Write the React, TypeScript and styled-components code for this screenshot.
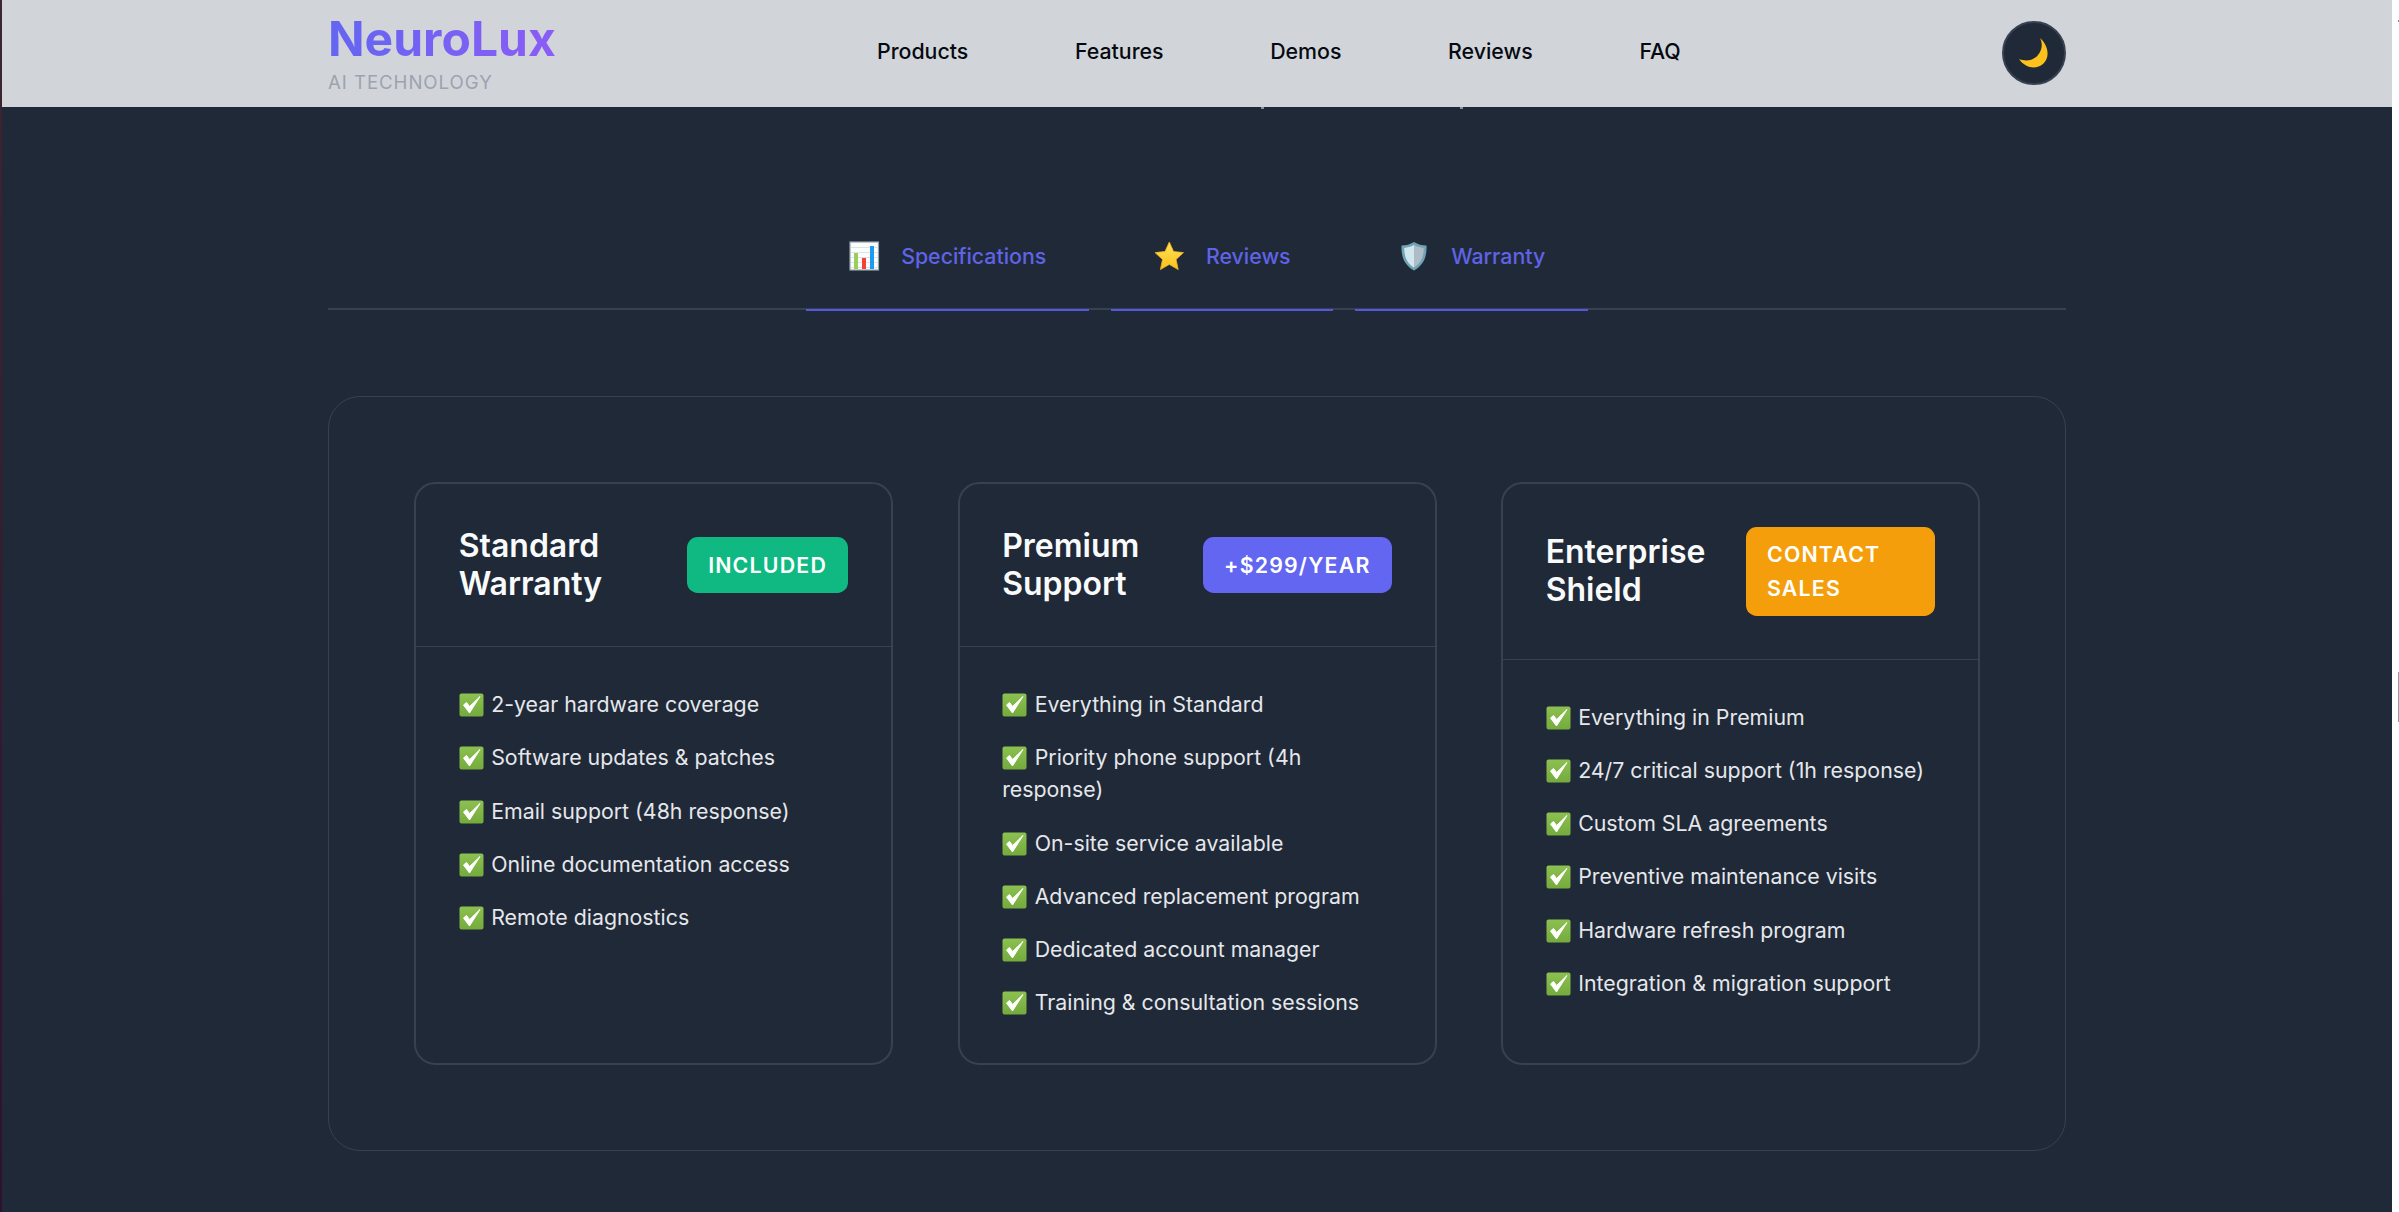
import React from "react";
import styled, { createGlobalStyle } from "styled-components";

// The source page is rendered at 133% so most sizes are multiples of 1.333px
const BG = "#1f2937";
const LINE = "#374151";
const ACCENT = "#5f63e6";

const GlobalStyle = createGlobalStyle`
  html, body {
    margin: 0;
    padding: 0;
    height: 100%;
    background: #fff;
    overflow: hidden;
  }
  * { box-sizing: border-box; }
  body {
    font-family: Inter, "Liberation Sans", sans-serif;
  }
`;

const Window = styled.div`
  position: relative;
  display: flex;
  width: 2399px;
  height: 1212px;
  overflow: hidden;
`;

const EdgeStrip = styled.div`
  flex: 0 0 2px;
  background: linear-gradient(to bottom, #3c2630, #2c1230);
`;

const Page = styled.div`
  flex: 0 0 2390px;
  background: ${BG};
  display: flex;
  flex-direction: column;
`;

const ScrollThumb = styled.div`
  position: absolute;
  right: 0;
  top: 672px;
  width: 1px;
  height: 50px;
  background: #9a9a9a;
`;

const ScrollDot = styled.div`
  position: absolute;
  right: 0;
  top: 20px;
  width: 1px;
  height: 2px;
  background: #8a8a8a;
`;

const Speck = styled.div<{ $x: number }>`
  position: absolute;
  left: ${(p) => p.$x}px;
  top: 107px;
  width: 3px;
  height: 2px;
  background: #8d939c;
`;

const Header = styled.header`
  flex: 0 0 107px;
  background: #d1d5da;
  padding: 0 326px;
  display: flex;
  align-items: center;
  justify-content: space-between;
`;

const Brand = styled.div`
  display: flex;
  flex-direction: column;
  padding-top: 4px;
`;

const Logo = styled.div`
  font-size: 48px;
  font-weight: 700;
  line-height: 53px;
  background: linear-gradient(to right, #6366f1, #8b5cf6);
  background-clip: text;
  -webkit-background-clip: text;
  color: transparent;
`;

const Tagline = styled.div`
  margin-top: 1px;
  font-size: 18.67px;
  line-height: 34px;
  letter-spacing: 0.93px;
  color: #9ca3af;
`;

const Nav = styled.nav`
  display: flex;
  gap: 106.67px;
`;

const NavLink = styled.a`
  font-size: 21.33px;
  font-weight: 500;
  line-height: 34px;
  color: #060a10;
  margin-top: -6px;
`;

const ThemeToggle = styled.button`
  width: 64px;
  height: 64px;
  padding: 0;
  margin-top: -1px;
  border-radius: 50%;
  border: 2.67px solid ${LINE};
  background: ${BG};
  display: flex;
  align-items: center;
  justify-content: center;
`;

const Main = styled.main`
  flex: 1;
  padding: 0 326px;
  display: flex;
  flex-direction: column;
`;

const Tabs = styled.div`
  margin-top: 124px;
  display: flex;
  justify-content: center;
  gap: 22px;
  border-bottom: 2px solid ${LINE};
  height: 79px;
`;

const Tab = styled.button`
  height: 80px;
  padding: 0 42.67px 28px;
  background: none;
  border: none;
  border-bottom: 2px solid #5558da;
  display: flex;
  align-items: center;
  gap: 21.33px;
  font-family: inherit;
  font-size: 21.33px;
  font-weight: 500;
  line-height: 34px;
  color: ${ACCENT};
`;

const Panel = styled.section`
  margin-top: 86px;
  height: 755px;
  border: 1px solid ${LINE};
  border-radius: 32px;
  padding: 85px;
  display: grid;
  grid-template-columns: repeat(3, 1fr);
  gap: 64.5px;
`;

const Plan = styled.article`
  border: 2px solid ${LINE};
  border-radius: 21.33px;
  display: flex;
  flex-direction: column;
`;

const PlanHeader = styled.div`
  padding: 42.67px;
  border-bottom: 1px solid ${LINE};
  display: flex;
  align-items: center;
  justify-content: space-between;
`;

const PlanTitle = styled.h3`
  margin: 0;
  font-size: 32px;
  font-weight: 600;
  line-height: 38.4px;
  color: #f9fafb;
`;

const Badge = styled.span<{ $bg: string; $nowrap?: boolean }>`
  padding: 10.67px 21.33px;
  border-radius: 10.67px;
  background: ${(p) => p.$bg};
  color: #fff;
  font-size: 21.33px;
  font-weight: 600;
  line-height: 34.13px;
  letter-spacing: 1.2px;
  white-space: ${(p) => (p.$nowrap ? "nowrap" : "normal")};
`;

const FeatureList = styled.ul`
  list-style: none;
  margin: 0;
  padding: 41px 42.67px 42.67px;
  display: flex;
  flex-direction: column;
  gap: 21.2px;
`;

const Feature = styled.li`
  font-size: 21.33px;
  line-height: 32px;
  color: #e5e7eb;
`;

const CheckBox = styled.svg`
  width: 25px;
  height: 24px;
  margin-right: 7.5px;
  vertical-align: -5px;
`;

const ChartIcon = () => (
  <svg width="31" height="30" viewBox="0 0 31 30">
    <rect x="1" y="1" width="28.5" height="28" fill="#fbfcfc" stroke="#93a3ad" strokeWidth="1.2" />
    {[6, 11, 16, 21, 26].map((y) => (
      <rect key={y} x="2" y={y} width="26.5" height="0.8" fill="#d5dce0" />
    ))}
    <rect x="5" y="12" width="4" height="16" fill="#9ccc5a" />
    <rect x="13" y="17" width="4" height="11" fill="#f44336" />
    <rect x="21" y="5" width="4" height="23" fill="#1e9bf0" />
  </svg>
);

const StarIcon = () => (
  <svg width="31" height="30" viewBox="0 0 31 30">
    <defs>
      <linearGradient id="star" x1="0" y1="0" x2="0" y2="1">
        <stop offset="0" stopColor="#ffe15a" />
        <stop offset="1" stopColor="#fcc21b" />
      </linearGradient>
    </defs>
    <path
      d="M15.3 1 L19.6 10.5 L29.5 11.6 L22.1 18.4 L24.2 28.6 L15.3 23.4 L6.4 28.6 L8.5 18.4 L1 11.6 L11 10.5 Z"
      fill="url(#star)"
      stroke="#f2b01e"
      strokeWidth="0.8"
      strokeLinejoin="round"
    />
  </svg>
);

const ShieldIcon = () => (
  <svg width="32" height="30" viewBox="-1 0 32 30">
    <path d="M15 1 C19 3.5 23 4.4 27.5 4.6 C28 15 25 24 15 29.5 C5 24 2 15 2.5 4.6 C7 4.4 11 3.5 15 1 Z" fill="#6fa3b5" />
    <path d="M15 4 C11.5 5.8 8.5 6.6 5.2 6.9 C5.2 15 7.5 22 15 26.5 Z" fill="#d2e6ee" />
    <path d="M15 4 C18.5 5.8 21.5 6.6 24.8 6.9 C24.8 15 22.5 22 15 26.5 Z" fill="#adbcc5" />
  </svg>
);

const MoonIcon = () => (
  <svg width="32" height="32" viewBox="0 0 32 32">
    <path
      d="M22 1 C31 9 32 21 25 27 C18 33 7 31 1 22 C9 25 16 23 20 18 C24 13 25 7 22 1 Z"
      fill="#fcc21b"
    />
  </svg>
);

const Check = () => (
  <CheckBox viewBox="0 0 25 24">
    <defs>
      <linearGradient id="check" x1="0" y1="0" x2="0" y2="1">
        <stop offset="0" stopColor="#8cc152" />
        <stop offset="1" stopColor="#75ab3c" />
      </linearGradient>
    </defs>
    <rect x="0.5" y="0.5" width="24" height="23" rx="2" fill="url(#check)" />
    <path
      d="M4.5 12 L10.5 20 L21 3.5 L10.6 13.5 L7.5 9.5 Z"
      fill="#fff"
      stroke="#fff"
      strokeWidth="1"
      strokeLinejoin="round"
    />
  </CheckBox>
);

const NAV_ITEMS = ["Products", "Features", "Demos", "Reviews", "FAQ"];

const TABS = [
  { label: "Specifications", icon: <ChartIcon /> },
  { label: "Reviews", icon: <StarIcon /> },
  { label: "Warranty", icon: <ShieldIcon /> },
];

const PLANS = [
  {
    title: "Standard Warranty",
    badge: "INCLUDED",
    color: "#10b981",
    features: [
      "2-year hardware coverage",
      "Software updates & patches",
      "Email support (48h response)",
      "Online documentation access",
      "Remote diagnostics",
    ],
  },
  {
    title: "Premium Support",
    badge: "+$299/YEAR",
    color: "#6366f1",
    nowrap: true,
    features: [
      "Everything in Standard",
      "Priority phone support (4h response)",
      "On-site service available",
      "Advanced replacement program",
      "Dedicated account manager",
      "Training & consultation sessions",
    ],
  },
  {
    title: "Enterprise Shield",
    badge: "CONTACT SALES",
    color: "#f59e0b",
    features: [
      "Everything in Premium",
      "24/7 critical support (1h response)",
      "Custom SLA agreements",
      "Preventive maintenance visits",
      "Hardware refresh program",
      "Integration & migration support",
    ],
  },
];

const App: React.FC = () => {
  return (
    <Window>
      <GlobalStyle />
      <EdgeStrip />
      <Page>
        <Header>
          <Brand>
            <Logo>NeuroLux</Logo>
            <Tagline>AI TECHNOLOGY</Tagline>
          </Brand>
          <Nav>
            {NAV_ITEMS.map((item) => (
              <NavLink key={item}>{item}</NavLink>
            ))}
          </Nav>
          <ThemeToggle>
            <MoonIcon />
          </ThemeToggle>
        </Header>

        <Main>
          <Tabs>
            {TABS.map((tab) => (
              <Tab key={tab.label}>
                {tab.icon}
                {tab.label}
              </Tab>
            ))}
          </Tabs>

          <Panel>
            {PLANS.map((plan) => (
              <Plan key={plan.title}>
                <PlanHeader>
                  <PlanTitle>{plan.title}</PlanTitle>
                  <Badge $bg={plan.color} $nowrap={plan.nowrap}>
                    {plan.badge}
                  </Badge>
                </PlanHeader>
                <FeatureList>
                  {plan.features.map((feature) => (
                    <Feature key={feature}>
                      <Check />
                      {feature}
                    </Feature>
                  ))}
                </FeatureList>
              </Plan>
            ))}
          </Panel>
        </Main>
      </Page>
      <Speck $x={1261} />
      <Speck $x={1460} />
      <ScrollDot />
      <ScrollThumb />
    </Window>
  );
};

export default App;
